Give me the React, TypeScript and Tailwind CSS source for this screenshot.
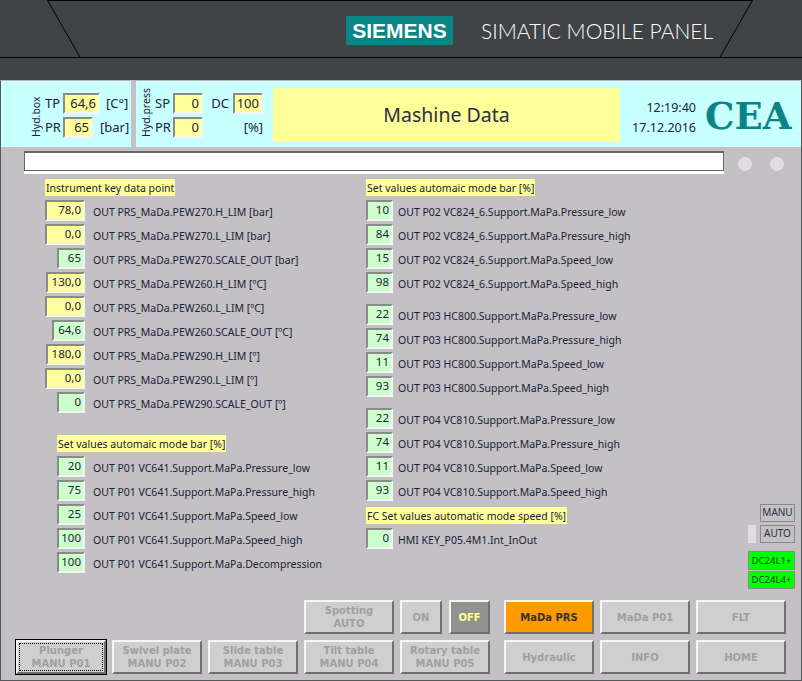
import type { ReactNode } from "react";

const leftRows = [
  ["78,0", "y", "w-10", "OUT PRS_MaDa.PEW270.H_LIM [bar]"],
  ["0,0", "y", "w-10", "OUT PRS_MaDa.PEW270.L_LIM [bar]"],
  ["65", "g", "w-7", "OUT PRS_MaDa.PEW270.SCALE_OUT [bar]"],
  ["130,0", "y", "w-[39px]", "OUT PRS_MaDa.PEW260.H_LIM [ºC]"],
  ["0,0", "y", "w-10", "OUT PRS_MaDa.PEW260.L_LIM [ºC]"],
  ["64,6", "g", "w-[33px]", "OUT PRS_MaDa.PEW260.SCALE_OUT [ºC]"],
  ["180,0", "y", "w-[39px]", "OUT PRS_MaDa.PEW290.H_LIM [º]"],
  ["0,0", "y", "w-10", "OUT PRS_MaDa.PEW290.L_LIM [º]"],
  ["0", "g", "w-7", "OUT PRS_MaDa.PEW290.SCALE_OUT [º]"],
];

const p01Rows = [
  ["20", "OUT P01 VC641.Support.MaPa.Pressure_low"],
  ["75", "OUT P01 VC641.Support.MaPa.Pressure_high"],
  ["25", "OUT P01 VC641.Support.MaPa.Speed_low"],
  ["100", "OUT P01 VC641.Support.MaPa.Speed_high"],
  ["100", "OUT P01 VC641.Support.MaPa.Decompression"],
];

const rightGroups = [
  [
    ["10", "OUT P02 VC824_6.Support.MaPa.Pressure_low"],
    ["84", "OUT P02 VC824_6.Support.MaPa.Pressure_high"],
    ["15", "OUT P02 VC824_6.Support.MaPa.Speed_low"],
    ["98", "OUT P02 VC824_6.Support.MaPa.Speed_high"],
  ],
  [
    ["22", "OUT P03 HC800.Support.MaPa.Pressure_low"],
    ["74", "OUT P03 HC800.Support.MaPa.Pressure_high"],
    ["11", "OUT P03 HC800.Support.MaPa.Speed_low"],
    ["93", "OUT P03 HC800.Support.MaPa.Speed_high"],
  ],
  [
    ["22", "OUT P04 VC810.Support.MaPa.Pressure_low"],
    ["74", "OUT P04 VC810.Support.MaPa.Pressure_high"],
    ["11", "OUT P04 VC810.Support.MaPa.Speed_low"],
    ["93", "OUT P04 VC810.Support.MaPa.Speed_high"],
  ],
];

function Field({ value, className }: { value: string; className: string }) {
  return (
    <div
      className={`h-[21px] border-2 border-t-[#8a8a8a] border-l-[#8a8a8a] border-r-[#f4f4f4] border-b-[#f4f4f4] pr-[2px] text-right text-[11.5px] leading-[16px] text-[#1c1c3c] ${className}`}
    >
      {value}
    </div>
  );
}

function Row({ children, label, labelGap }: { children: ReactNode; label: string; labelGap: string }) {
  return (
    <div className="flex h-6 items-start">
      <div className="flex shrink-0 justify-end">{children}</div>
      <span className={`pt-[5px] text-[10.5px] leading-[15px] whitespace-nowrap text-[#20203a] ${labelGap}`}>{label}</span>
    </div>
  );
}

function Title({ children, className = "" }: { children: ReactNode; className?: string }) {
  return (
    <div className={`h-[17px] w-fit bg-[#ffff99] px-[1px] text-[10.5px] leading-[18px] whitespace-nowrap text-[#20203a] ${className}`}>
      {children}
    </div>
  );
}

function Btn({
  top,
  bottom,
  width = "w-[90px]",
  tone = "bg-[#cfcfcf] text-[#a0a09c]",
  className = "",
}: {
  top: string;
  bottom?: string;
  width?: string;
  tone?: string;
  className?: string;
}) {
  return (
    <div
      className={`flex h-[34px] shrink-0 flex-col items-center justify-center border-2 border-t-[#f6f6f6] border-l-[#f6f6f6] border-r-[#707070] border-b-[#707070] font-['DejaVu_Sans',sans-serif] text-[10px] leading-[13px] font-bold ${width} ${tone} ${className}`}
    >
      <span>{top}</span>
      {bottom && <span>{bottom}</span>}
    </div>
  );
}

function HeadField({ value, width = "w-[30px]" }: { value: string; width?: string }) {
  return (
    <div
      className={`h-[21px] border-2 border-t-[#8a8a8a] border-l-[#8a8a8a] border-r-[#f4f4f4] border-b-[#f4f4f4] bg-[#ffff99] pr-[2px] text-right text-[13px] leading-[16px] text-[#1c1c3c] ${width}`}
    >
      {value}
    </div>
  );
}

export default function App() {
  return (
    <div className="h-[681px] w-[802px] overflow-hidden bg-[#3f4346] font-['Noto_Sans',sans-serif]">
      {/* Bezel */}
      <div className="relative h-20">
        <svg className="absolute inset-0" width="802" height="80" viewBox="0 0 802 80" fill="none">
          <path d="M47.5 .5H752.5M47.5 .5L80 57M752.5 .5L720 57M0 57.5H802" stroke="#000" />
        </svg>
        <div className="relative flex items-start pt-4 pl-[346px]">
          <div className="flex h-[29px] w-[107px] items-center justify-center bg-[#0a8585] font-['Liberation_Sans',sans-serif] text-[21px] font-bold text-white">
            SIEMENS
          </div>
          <div className="ml-7 font-['Lato',sans-serif] text-[21px] leading-[29px] font-light whitespace-nowrap text-white">
            SIMATIC MOBILE PANEL
          </div>
        </div>
      </div>

      {/* Screen */}
      <div className="h-[601px] border-t border-r border-b border-l border-t-[#b8b8b8] border-r-[#55585a] border-b-[#55585a] border-l-[#55585a] bg-[#c3c1c3]">
        {/* Header */}
        <div className="flex h-[66px] bg-[#c8ffff]">
          <div className="flex h-full w-[130px] shrink-0 items-start pt-3 pl-[29px]">
            <span className="mt-[7px] h-[37px] rotate-180 text-[10.5px] leading-[12px] text-[#20203a] [writing-mode:vertical-rl]">Hyd.box</span>
            <div className="ml-[3px] flex flex-col gap-[3px] text-[13px] leading-[21px] text-[#20203a]">
              <div className="flex">
                <span className="w-[18px]">TP</span>
                <HeadField value="64,6" width="w-[37px]" />
                <span className="ml-[6px]">[C°]</span>
              </div>
              <div className="flex">
                <span className="w-[18px]">PR</span>
                <HeadField value="65" />
                <span className="ml-[7px]">[bar]</span>
              </div>
            </div>
          </div>
          <div className="h-full w-[5px] shrink-0 bg-[#c3c1c3]" />
          <div className="flex h-full w-[137px] shrink-0 items-start pt-3 pl-[4px]">
            <span className="h-[44px] rotate-180 text-[10.5px] leading-[12px] text-[#20203a] [writing-mode:vertical-rl]">Hyd.press</span>
            <div className="ml-[3px] grid grid-cols-[18px_30px_26px_4px_30px] gap-y-[3px] text-[13px] leading-[21px] text-[#20203a]">
              <span>SP</span>
              <HeadField value="0" />
              <span className="text-right">DC</span>
              <span />
              <HeadField value="100" />
              <span>PR</span>
              <HeadField value="0" />
              <span />
              <span />
              <span className="text-right">[%]</span>
            </div>
          </div>
          <div className="mt-[7px] flex h-[54px] w-[347px] shrink-0 items-center justify-center bg-[#ffff99] text-[19.5px] text-[#2d2d44]">
            Mashine Data
          </div>
          <div className="flex w-[76px] shrink-0 flex-col items-end pt-[17px] text-[12.5px] leading-[20px] text-[#1c1c3c]">
            <span>12:19:40</span>
            <span>17.12.2016</span>
          </div>
          <div className="ml-[9px] pt-[11px] font-['DejaVu_Serif',serif] text-[37px] leading-[48px] font-bold text-[#0a8585]">CEA</div>
        </div>

        {/* Message line */}
        <div className="flex h-[26px] items-start pt-1 pl-[23px]">
          <div className="h-[23px] w-[700px] border-b-[3px] border-b-white">
            <div className="h-5 border-t-2 border-r border-b border-l border-[#666] bg-white" />
          </div>
          <div className="mt-[6px] ml-[14px] h-[14px] w-[14px] rounded-full bg-[#e0dee0]" />
          <div className="mt-[6px] ml-[18px] h-[14px] w-[14px] rounded-full bg-[#e0dee0]" />
        </div>

        {/* Data columns */}
        <div className="flex h-[427px] pt-[6px]">
          <div className="ml-[44px] w-[321px] shrink-0">
            <Title>Instrument key data point</Title>
            <div className="mt-1">
              {leftRows.map(([value, tone, width, label], i) => (
                <Row key={i} label={label} labelGap="ml-2">
                  <div className="flex w-10 justify-end">
                    <Field value={value} className={`${width} ${tone === "y" ? "bg-[#ffff99]" : "bg-[#ccffcc]"}`} />
                  </div>
                </Row>
              ))}
            </div>
            <Title className="mt-[19px] ml-3">Set values automaic mode bar [%]</Title>
            <div className="mt-1">
              {p01Rows.map(([value, label]) => (
                <Row key={label} label={label} labelGap="ml-2">
                  <div className="flex w-10 justify-end">
                    <Field value={value} className="w-7 bg-[#ccffcc]" />
                  </div>
                </Row>
              ))}
            </div>
          </div>

          <div className="w-[382px] shrink-0">
            <Title>Set values automaic mode bar [%]</Title>
            <div className="mt-1 flex flex-col gap-2">
              {rightGroups.map((group, i) => (
                <div key={i}>
                  {group.map(([value, label]) => (
                    <Row key={label} label={label} labelGap="ml-[5px]">
                      <Field value={value} className="w-[27px] bg-[#ccffcc]" />
                    </Row>
                  ))}
                </div>
              ))}
            </div>
            <Title className="mt-[3px]">FC Set values automatic mode speed [%]</Title>
            <div className="mt-1">
              <Row label="HMI KEY_P05.4M1.Int_InOut" labelGap="ml-[5px]">
                <Field value="0" className="w-[27px] bg-[#ccffcc]" />
              </Row>
            </div>
          </div>

          {/* Mode indicators */}
          <div className="flex w-[47px] shrink-0 flex-col items-end pt-[325px] text-[10px] leading-[15px]">
            <div className="h-[18px] w-[35px] border border-[#8a8a8a] text-center text-[#30304a]">MANU</div>
            <div className="mt-[3px] flex gap-1">
              <div className="h-[18px] w-2 bg-[#e0dee0]" />
              <div className="h-[18px] w-[35px] border border-[#8a8a8a] text-center text-[#30304a]">AUTO</div>
            </div>
            <div className="mt-2 h-[19px] w-[47px] border border-[#8a8a8a] bg-[#00ff00] text-center text-[9.6px] leading-[17px] text-[#0a3a0a]">DC24L1+</div>
            <div className="mt-[1px] h-[18px] w-[47px] border border-[#8a8a8a] bg-[#00ff00] text-center text-[9.6px] leading-[16px] text-[#0a3a0a]">DC24L4+</div>
          </div>
        </div>

        {/* Bottom buttons */}
        <div className="flex flex-col gap-[6px]">
          <div className="flex pl-[303px]">
            <Btn top="Spotting" bottom="AUTO" />
            <Btn top="ON" width="w-[42px]" className="ml-[6px]" />
            <Btn top="OFF" width="w-[41px]" tone="bg-[#92938e] text-[#ffff99]" className="ml-[7px]" />
            <Btn top="MaDa PRS" tone="bg-[#ff9900] text-[#333333]" className="ml-[14px]" />
            <Btn top="MaDa P01" className="ml-[6px]" />
            <Btn top="FLT" className="ml-[6px]" />
          </div>
          <div className="flex pl-[15px]">
            <div className="relative">
              <Btn top="Plunger" bottom="MANU P01" className="outline outline-1 outline-black" />
              <div className="absolute inset-[3px] border border-dotted border-black" />
            </div>
            <Btn top="Swivel plate" bottom="MANU P02" className="ml-[6px]" />
            <Btn top="Slide table" bottom="MANU P03" className="ml-[6px]" />
            <Btn top="Tilt table" bottom="MANU P04" className="ml-[6px]" />
            <Btn top="Rotary table" bottom="MANU P05" className="ml-[6px]" />
            <Btn top="Hydraulic" className="ml-[14px]" />
            <Btn top="INFO" className="ml-[6px]" />
            <Btn top="HOME" className="ml-[6px]" />
          </div>
        </div>
      </div>
    </div>
  );
}
